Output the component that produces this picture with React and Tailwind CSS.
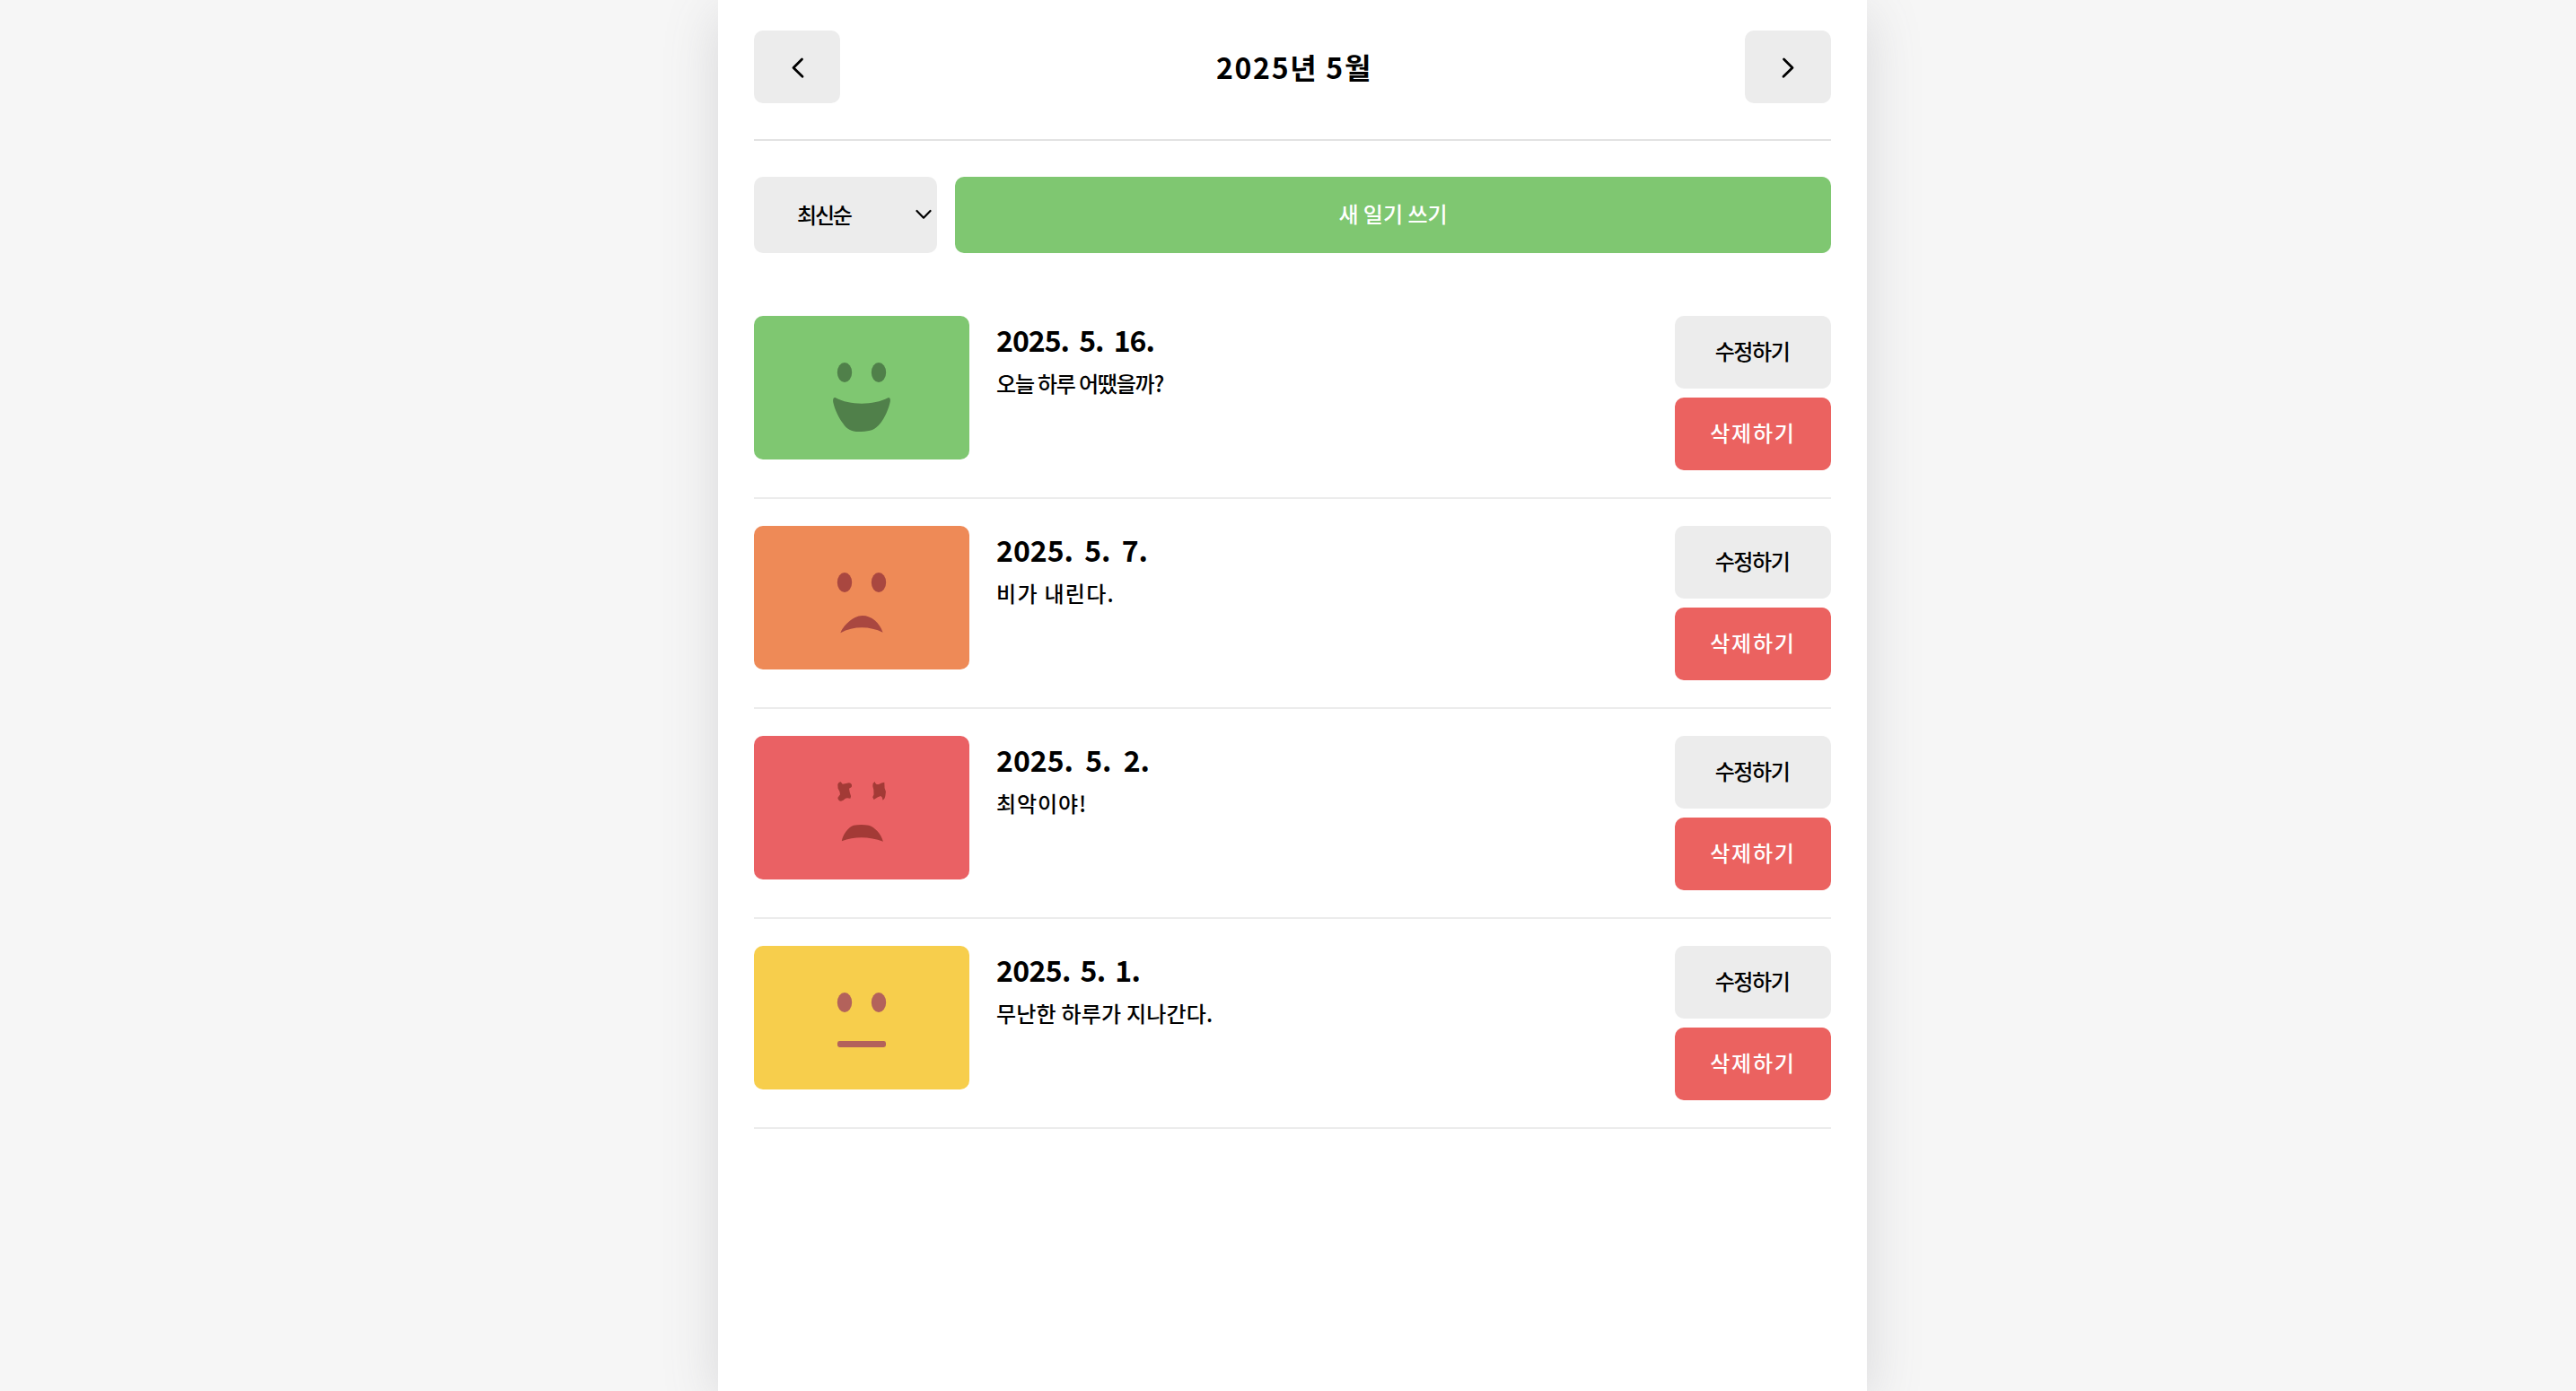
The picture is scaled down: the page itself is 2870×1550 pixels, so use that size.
const leftEye = "M96.7 51.3 Q97.8 52.8 98.8 53.7 Q102.5 53 106 52.3 Q108.5 52.5 109.1 54.7 L108.8 57 L106 58.7 Q106.5 63 108.1 67.3 L107.4 69.7 L104 69.2 L101.9 69.7 Q99.5 72 97 72.7 Q94 72.5 93.3 69 L96 65.3 Q96 62 93.6 58.5 L93.3 54 Q94.5 51 96.7 51.3 Z";
const rightEye = "M134.6 51 Q135 53.2 136.7 54 L139 54 Q142 52.2 145.3 51.7 L145.6 58.3 Q147.5 61.5 146.6 65.3 Q146.3 70 143.6 71.7 L142.8 68.5 L141.2 67 L138 68.3 L133.6 71 L132.2 68.3 L133.5 65.5 Q134 60 132.3 56 L132.6 53 Z";

function RoundEyes() {
  return (
    <>
      <ellipse cx="101" cy="63" rx="8.2" ry="11" />
      <ellipse cx="139" cy="63" rx="8.2" ry="11" />
    </>
  );
}

function Face({ mood }) {
  return (
    <svg viewBox="0 0 240 160" className="size-full" fill="currentColor">
      {mood === "dead" ? (
        <>
          <path d={leftEye} />
          <path d={rightEye} />
          <path d="M97.8 117.2 C99 110 105 101.5 111 99.7 C116 98.8 123 98.8 128 99.7 C135 102 141.5 109 143.9 117.7 C129 111.8 112 111.6 97.8 117.2 Z" />
        </>
      ) : (
        <RoundEyes />
      )}
      {mood === "happy" && (
        <path d="M91 91.3 C107 99.8 133 99.8 149.5 91.2 C151.5 90.5 152.3 93 151.8 95.5 C150 104 146 113 141 119.5 C135 127 130 128.5 119.5 129 C109 129.5 104 127 99 119.5 C94 113 90 104 88.2 96 C87.7 92.5 89 90.5 91 91.3 Z" />
      )}
      {mood === "sad" && (
        <path d="M96.4 119.3 C99 112 110 100 120.8 100 C131 100 140 108 143.6 118.7 C129 111.5 111 111.2 96.4 119.3 Z" />
      )}
      {mood === "flat" && <rect x="93" y="106" width="54" height="7" rx="2.4" />}
    </svg>
  );
}

const entries = [
  { date: "2025. 5. 16.", text: "오늘 하루 어땠을까?", mood: "happy", tile: "bg-[#7fc771] text-[#50804a]", dateTrack: "tracking-[-1px] [word-spacing:5px]", track: "tracking-[-1.2px]" },
  { date: "2025. 5. 7.", text: "비가 내린다.", mood: "sad", tile: "bg-[#ee8a57] text-[#a94740]", dateTrack: "[word-spacing:5px]", track: "tracking-[1.3px]" },
  { date: "2025. 5. 2.", text: "최악이야!", mood: "dead", tile: "bg-[#ea6164] text-[#a33a36]", dateTrack: "[word-spacing:6px]", track: "tracking-[0.9px]" },
  { date: "2025. 5. 1.", text: "무난한 하루가 지나간다.", mood: "flat", tile: "bg-[#f7ce4c] text-[#b3625b]", dateTrack: "tracking-[-0.6px] [word-spacing:4px]", track: "tracking-[0.2px]" },
];

function Entry({ date, text, mood, tile, dateTrack, track }) {
  return (
    <li className="flex border-b-2 border-[#ececec] py-[30px]">
      <div className={`h-40 w-60 shrink-0 overflow-hidden rounded-[10px] ${tile}`}>
        <Face mood={mood} />
      </div>
      <div className="flex-1 pt-1.5 pl-[30px]">
        <h2 className={`text-[32px] leading-10 font-bold whitespace-pre ${dateTrack}`}>{date}</h2>
        <p className={`mt-[11px] text-[24px] leading-9 ${track}`}>{text}</p>
      </div>
      <div className="flex w-[174px] flex-col gap-2.5">
        <button className="h-[81px] rounded-[10px] bg-[#ececec] pr-0.5 pb-[3px] text-[24px] tracking-[-1.4px]">수정하기</button>
        <button className="h-[81px] rounded-[10px] bg-[#eb6260] pb-[3px] text-[24px] tracking-[1.8px] text-white">삭제하기</button>
      </div>
    </li>
  );
}

function MonthButton({ label, d }) {
  return (
    <button aria-label={label} className="h-[81px] w-24 rounded-[10px] bg-[#ececec]">
      <svg viewBox="0 0 96 81" className="size-full" fill="none" stroke="currentColor" strokeWidth="2.8" strokeLinecap="round" strokeLinejoin="round">
        <path d={d} />
      </svg>
    </button>
  );
}

export default function App() {
  return (
    <div className="h-[1550px] overflow-hidden bg-[#f6f6f6] pl-[800px] font-['Noto_Sans_CJK_KR',sans-serif] font-medium text-black">
      <main className="h-full w-[1280px] bg-white px-10 shadow-[0_14px_58px_0_rgba(100,100,111,0.2)]">
        <header className="flex h-[157px] items-start justify-between border-b-2 border-[#e2e2e2] pt-[34px]">
          <MonthButton label="이전 달" d="M53.5 32 L44 41.5 L54 51.2" />
          <h1 className="pl-1 text-[32px] leading-[80px] font-bold tracking-[1.7px]">2025년 5월</h1>
          <MonthButton label="다음 달" d="M43.5 32 L53 41.5 L43 51.2" />
        </header>
        <div className="flex gap-5 pt-10 pb-10">
          <button className="flex h-[85px] w-[204px] items-center justify-between rounded-[10px] bg-[#ececec] pr-1.5 pb-[2px] pl-12 text-[24px] tracking-[-2.2px]">
            최신순
            <svg viewBox="0 0 18 12" className="h-3 w-[18px]" fill="none" stroke="currentColor" strokeWidth="2.2" strokeLinecap="round" strokeLinejoin="round">
              <path d="M1.5 2 L9 9.7 L16.5 2" />
            </svg>
          </button>
          <button className="h-[85px] flex-1 rounded-[10px] bg-[#7fc771] pb-[3px] text-[24px] text-white">새 일기 쓰기</button>
        </div>
        <ul>
          {entries.map((entry) => (
            <Entry key={entry.date} {...entry} />
          ))}
        </ul>
      </main>
    </div>
  );
}
